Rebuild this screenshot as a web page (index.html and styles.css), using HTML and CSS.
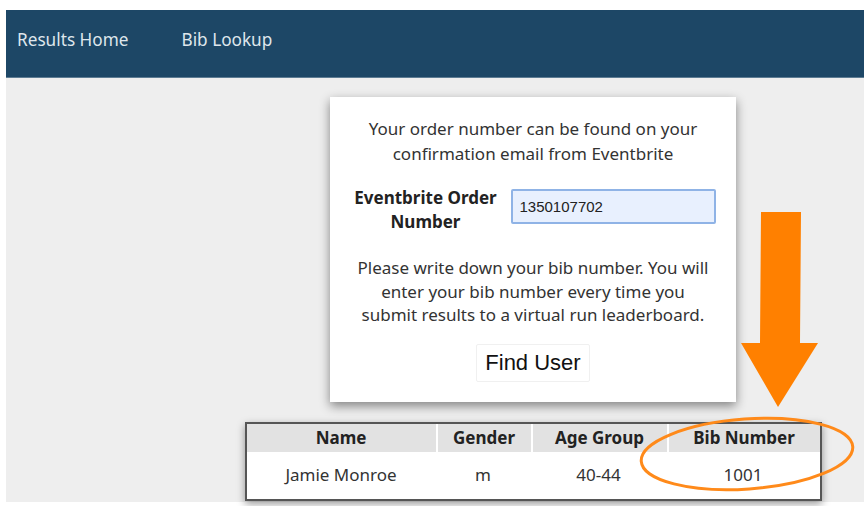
FILE: index.html
```html
<!DOCTYPE html>
<html lang="en">
<head>
<meta charset="utf-8">
<title>Bib Lookup</title>
<link rel="stylesheet" href="styles.css">
</head>
<body>
<div class="frame">
  <nav class="topnav">
    <a class="nav-link" href="#">Results Home</a>
    <a class="nav-link" href="#">Bib Lookup</a>
  </nav>
  <main class="content">
    <section class="lookup-card">
      <p class="hint">Your order number can be found on your confirmation email from Eventbrite</p>
      <div class="field-row">
        <label class="field-label" for="order">Eventbrite Order Number</label>
        <input class="field-input" id="order" type="text" value="1350107702">
      </div>
      <p class="note">Please write down your bib number. You will enter your bib number every time you submit results to a virtual run leaderboard.</p>
      <button class="find-btn" type="button">Find User</button>
    </section>

    <table class="result-table">
      <thead>
        <tr>
          <th class="col-name">Name</th>
          <th class="col-gender">Gender</th>
          <th class="col-age">Age Group</th>
          <th class="col-bib">Bib Number</th>
        </tr>
      </thead>
      <tbody>
        <tr>
          <td>Jamie Monroe</td>
          <td>m</td>
          <td>40-44</td>
          <td>1001</td>
        </tr>
      </tbody>
    </table>

    <!-- callout: arrow pointing down at the bib number, circled -->
    <svg class="callout" width="864" height="430" viewBox="0 0 864 430" aria-hidden="true">
      <polygon points="761,134 801,134 800,265 818,265 778,329 741,265 760,265" fill="#ff8000"/>
      <ellipse cx="747" cy="376" rx="106" ry="35" transform="rotate(-4 747 376)" fill="none" stroke="#ff8a1a" stroke-width="3"/>
    </svg>
  </main>
</div>
</body>
</html>
```

FILE: styles.css
```css
* {
  box-sizing: border-box;
}

html, body {
  margin: 0;
  background: #ffffff;
}

body {
  font-family: "Segoe UI", "Noto Sans", "Open Sans", sans-serif;
  color: #333333;
}

.frame {
  padding: 10px 0 4px 6px;
  height: 506px;
  display: flex;
  flex-direction: column;
}

.topnav {
  background: #1d4766;
  height: 68px;
  display: flex;
  align-items: center;
  padding: 0 0 8px 11px;
  gap: 53px;
  border-bottom: 1px solid #5d7c93;
}

.nav-link {
  color: #dfe6ec;
  text-decoration: none;
  font-size: 17.2px;
}

.content {
  position: relative;
  flex: 1;
  background: #eeeeee;
  display: flex;
  flex-direction: column;
  align-items: center;
  padding: 19px 0 0 196px;
}

.lookup-card {
  width: 406px;
  background: #ffffff;
  box-shadow: 0 4px 10px rgba(0, 0, 0, 0.45);
  padding: 19px 16px 20px;
  display: flex;
  flex-direction: column;
  align-items: center;
  text-align: center;
  font-size: 17px;
}

.hint {
  margin: 0;
  line-height: 25px;
  width: 345px;
}

.field-row {
  margin-top: 17px;
  display: flex;
  align-items: flex-start;
  gap: 10px;
}

.field-label {
  width: 150px;
  padding-top: 3px;
  font-weight: bold;
  color: #222222;
  line-height: 24px;
  font-size: 17px;
}

.field-input {
  margin-top: 6px;
  width: 205px;
  height: 35px;
  background: #e8f0fe;
  border: 2px solid #8fb3e6;
  border-radius: 2px;
  padding: 0 7px;
  font-family: "Liberation Sans", Arial, sans-serif;
  font-size: 15px;
  color: #222222;
}

.note {
  margin: 22px 0 0;
  line-height: 23.5px;
  width: 356px;
}

.find-btn {
  margin-top: 17px;
  height: 38px;
  padding: 0 8px;
  background: #ffffff;
  border: 1px solid #f0f0f0;
  border-radius: 2px;
  font-family: "Liberation Sans", Arial, sans-serif;
  font-size: 22px;
  color: #111111;
}

.result-table {
  margin-top: 20px;
  width: 577px;
  border-collapse: separate;
  border-spacing: 0;
  border: 2px solid #555555;
  background: #ffffff;
  box-shadow: 0 3px 8px rgba(0, 0, 0, 0.4);
  font-size: 17px;
}

.result-table th {
  background: #e2e2e2;
  color: #222222;
  font-weight: bold;
  height: 28px;
  padding: 0;
  border-left: 2px solid #ffffff;
}

.result-table th:first-child {
  border-left: none;
}

.result-table td {
  text-align: center;
  height: 47px;
  padding: 0 0 2px;
  color: #333333;
}

.col-name { width: 189px; }
.col-gender { width: 95px; }
.col-age { width: 136px; }
.col-bib { width: 153px; }

.callout {
  position: absolute;
  left: -6px;
  top: 0;
  pointer-events: none;
}
```
